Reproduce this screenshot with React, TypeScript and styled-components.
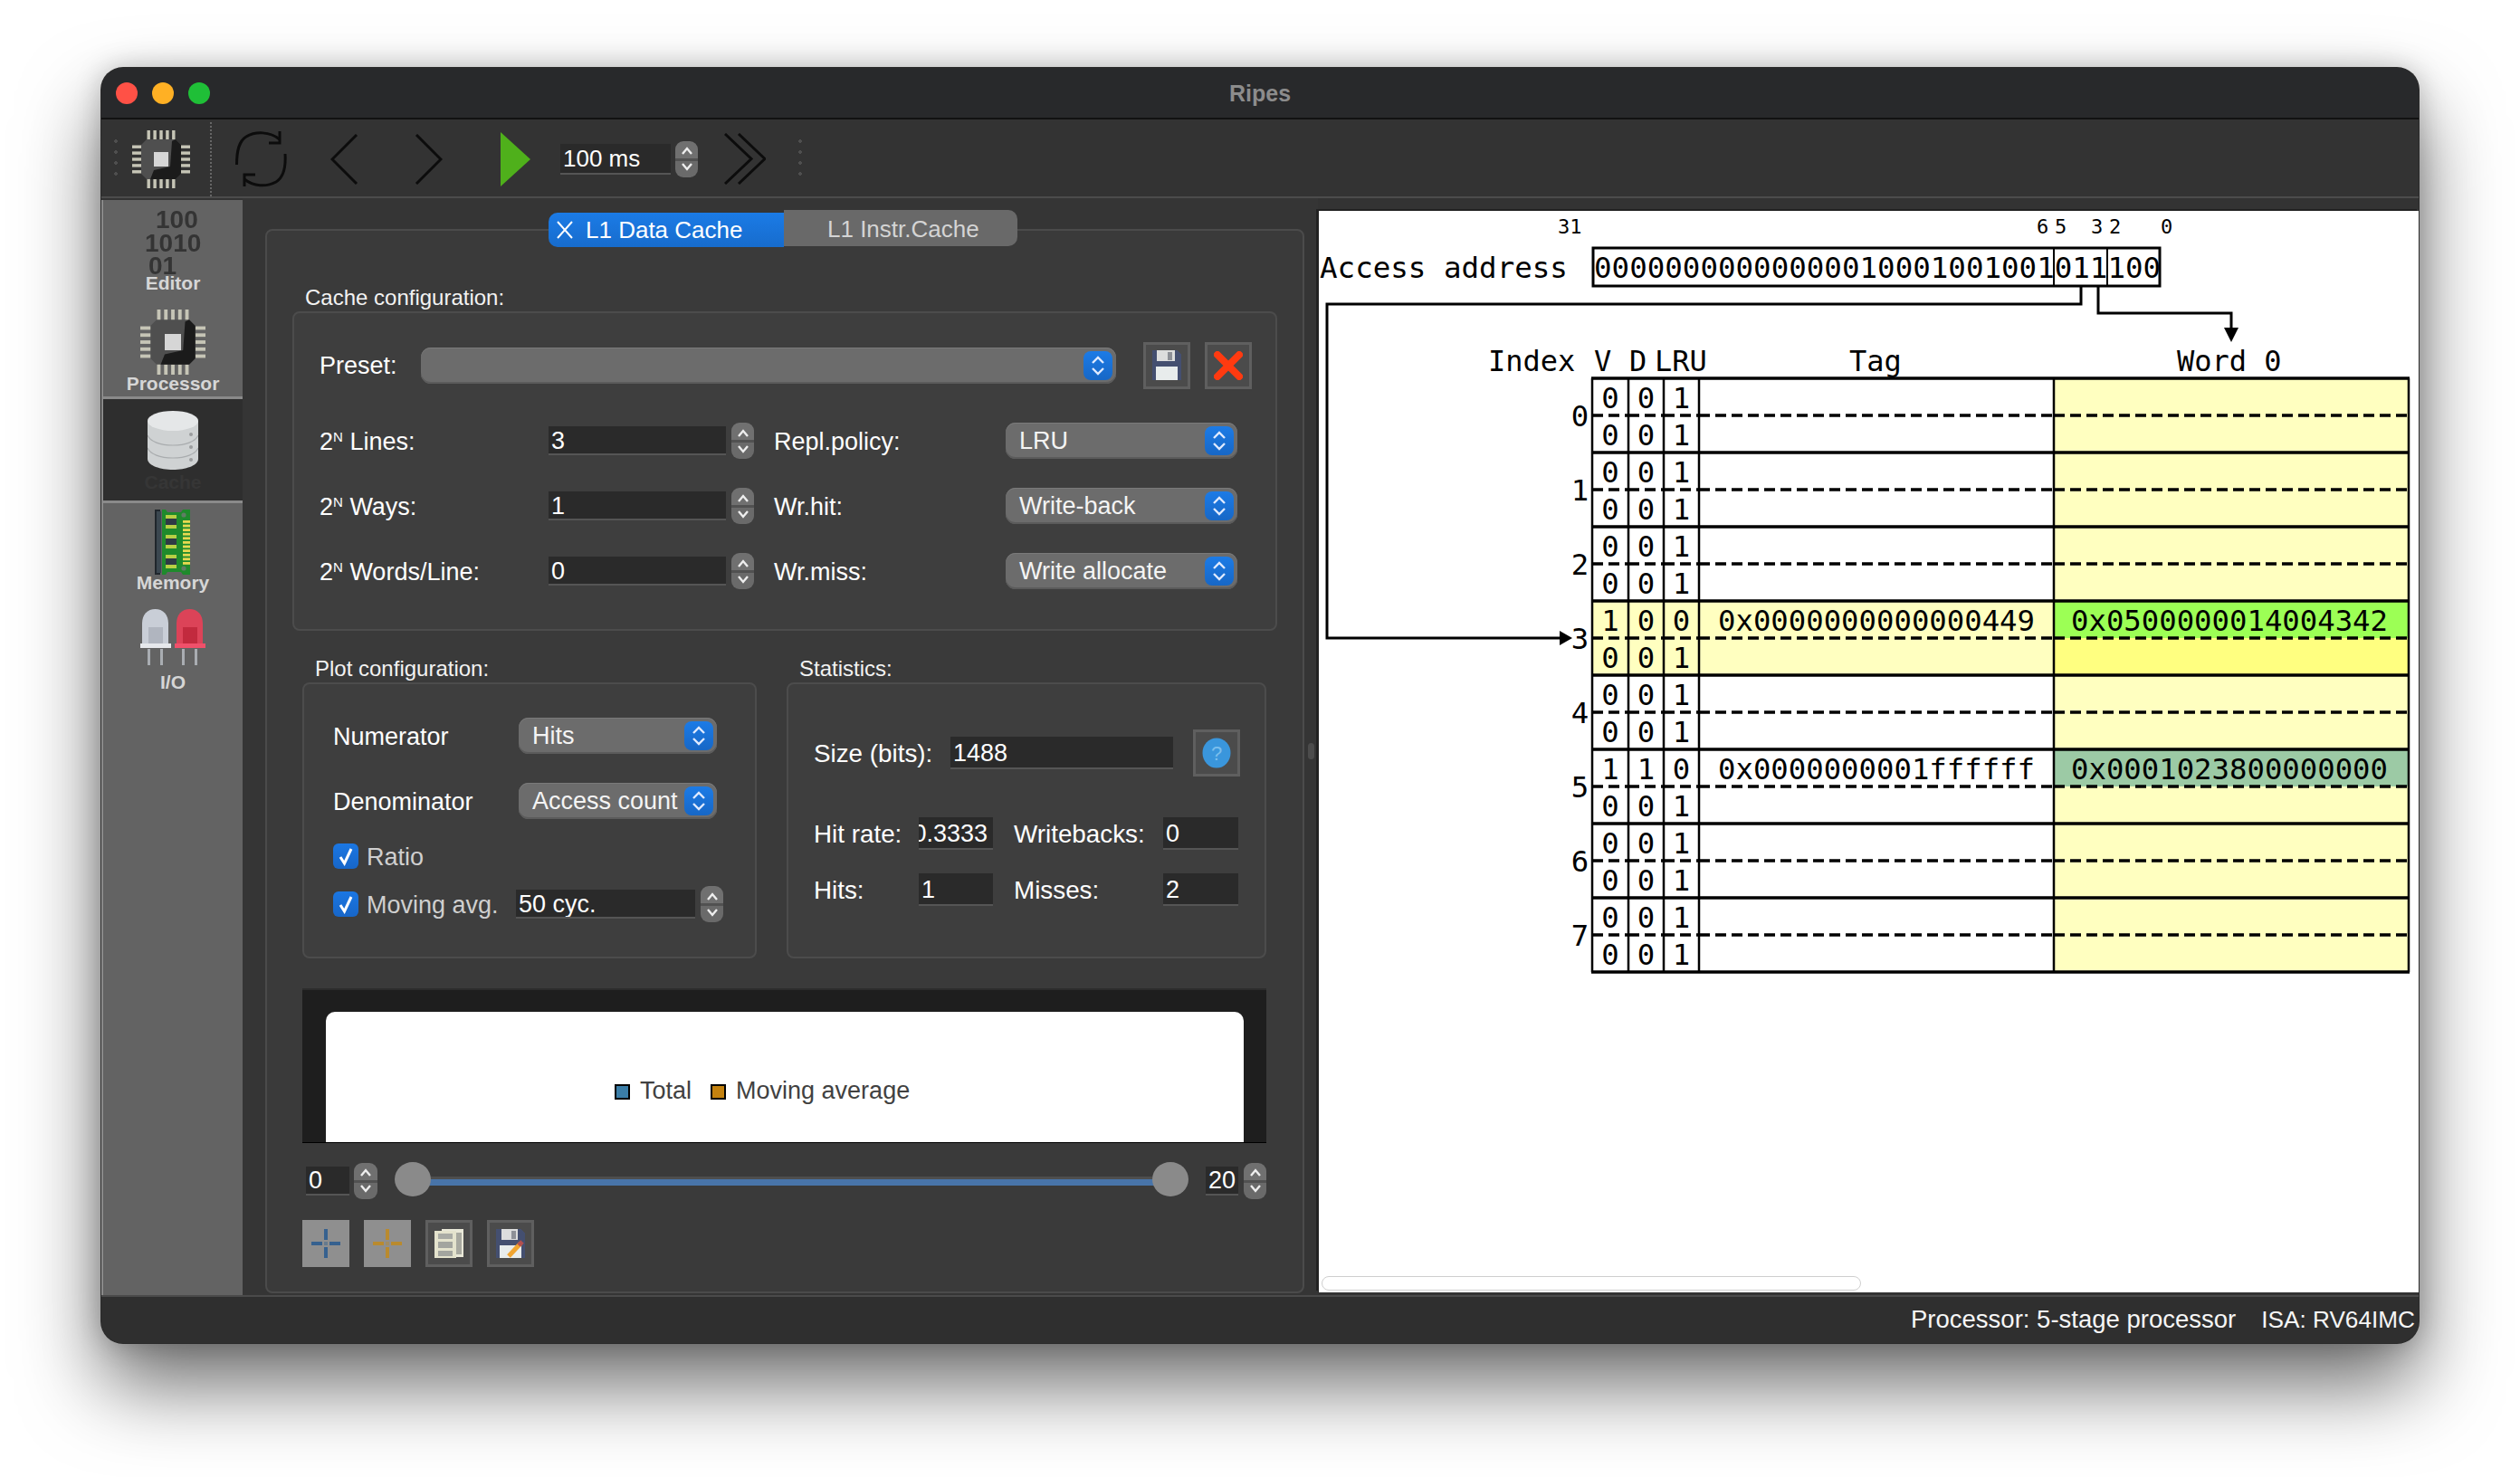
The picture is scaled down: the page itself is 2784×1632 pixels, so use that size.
import React from "react";
import styled, { createGlobalStyle } from "styled-components";

const sans = "'Liberation Sans', Arial, Helvetica, sans-serif";
const mono = "'DejaVu Sans Mono', 'Liberation Mono', monospace";

const Global = createGlobalStyle`
  *, *::before, *::after { box-sizing: border-box; }
  html, body { margin: 0; padding: 0; background: #fff; }
  body { font-family: ${sans}; }
`;

const Page = styled.div`
  width: 2784px;
  height: 1632px;
  padding: 75px 0 0 112px;
  background: #fff;
  overflow: hidden;
`;
const Window = styled.div`
  width: 2560px;
  height: 1409px;
  border-radius: 24px;
  overflow: hidden;
  display: flex;
  flex-direction: column;
  background: #333;
  color: #fff;
  font-size: 27px;
  box-shadow: 0 0 0 1px #2a2a2a, 0 46px 88px rgba(0, 0, 0, 0.58), 0 0 30px rgba(0, 0, 0, 0.22);
`;
const TitleBar = styled.header`
  height: 57px;
  flex: none;
  display: grid;
  grid-template-columns: 1fr auto 1fr;
  align-items: center;
  background: #28292b;
  border-bottom: 2px solid #121212;
  padding: 0 16px;
`;
const Lights = styled.div`
  display: flex;
  gap: 16px;
`;
const Light = styled.span<{ $c: string }>`
  width: 24px;
  height: 24px;
  border-radius: 50%;
  background: ${(p) => p.$c};
`;
const Title = styled.div`
  font-weight: 700;
  font-size: 25px;
  color: #8c8c8c;
  padding-top: 2px;
`;

const Toolbar = styled.div`
  height: 87px;
  flex: none;
  display: flex;
  align-items: center;
  padding-top: 2px;
  background: #333;
  border-bottom: 2px solid #4c4c4c;
`;
const ToolIcon = styled.svg<{ $ml: number }>`
  flex: none;
  display: block;
  margin-left: ${(p) => p.$ml}px;
`;
const Grip = styled.div<{ $ml: number }>`
  margin-left: ${(p) => p.$ml}px;
  width: 4px;
  height: 52px;
  background-image: radial-gradient(circle, #4f4f4f 1.6px, transparent 2px);
  background-size: 4px 12px;
  background-repeat: repeat-y;
`;
const DotSep = styled.div<{ $ml: number }>`
  margin-left: ${(p) => p.$ml}px;
  width: 0;
  height: 82px;
  border-left: 2px dotted #666;
`;

const Body = styled.div`
  flex: none;
  height: 1212px;
  display: flex;
`;
const Sidebar = styled.nav`
  width: 156px;
  flex: none;
  margin-top: 2px;
  background: #636363;
  border-left: 2px solid #8a8a8a;
  display: flex;
  flex-direction: column;
  align-items: stretch;
`;
const SideItem = styled.div<{ $h: number; $pt: number; $selected?: boolean; $rule?: boolean }>`
  height: ${(p) => p.$h}px;
  flex: none;
  padding-top: ${(p) => p.$pt}px;
  display: flex;
  flex-direction: column;
  align-items: center;
  background: ${(p) => (p.$selected ? "#2e2e2e" : "transparent")};
  border-bottom: ${(p) => (p.$rule ? "3px solid #8a8a8a" : "none")};
`;
const SideLabel = styled.div<{ $mt: number; $c?: string }>`
  font-weight: 700;
  font-size: 21px;
  line-height: 22px;
  margin-top: ${(p) => p.$mt}px;
  color: ${(p) => p.$c ?? "#d6d6d6"};
`;
const Binary = styled.div`
  width: 62px;
  font-weight: 700;
  font-size: 28px;
  line-height: 25.5px;
  color: #343434;
  filter: blur(0.5px);
  height: 72px;
`;
const BinaryLine = styled.div<{ $ml: number }>`
  margin-left: ${(p) => p.$ml}px;
`;

const Center = styled.section`
  width: 1188px;
  flex: none;
  position: relative;
  padding: 13px 15px 2px 25px;
  background: #353535;
  display: flex;
  flex-direction: column;
`;
const Splitter = styled.div`
  position: absolute;
  left: 1177px;
  top: 602px;
  width: 7px;
  height: 18px;
  border-radius: 4px;
  background: #4c4c4c;
`;
const TabBar = styled.div`
  height: 41px;
  flex: none;
  display: flex;
  align-items: flex-start;
  margin-left: 313px;
  position: relative;
  z-index: 1;
  font-size: 26px;
`;
const ActiveTab = styled.div`
  width: 260px;
  height: 38px;
  margin-top: 3px;
  padding-left: 9px;
  display: flex;
  align-items: center;
  gap: 14px;
  border-radius: 10px 0 0 10px;
  background: linear-gradient(#1b7be6, #176ccd);
  color: #fff;
`;
const IdleTab = styled.div`
  width: 258px;
  height: 40px;
  padding: 2px 0 0 48px;
  display: flex;
  align-items: center;
  border-radius: 0 10px 10px 0;
  background: #696969;
  color: #d4d4d4;
`;
const TabPane = styled.div`
  flex: 1;
  margin-top: -20px;
  padding: 63px 28px 0 28px;
  background: #3a3a3a;
  border: 2px solid #4b4b4b;
  border-radius: 8px;
  display: flex;
  flex-direction: column;
`;
const SectionLabel = styled.div`
  height: 26px;
  padding-left: 14px;
  font-size: 24px;
  line-height: 22px;
  color: #f2f2f2;
`;
const CacheGroup = styled.div`
  height: 353px;
  padding: 32px 0 0 28px;
  background: #3e3e3e;
  border: 2px solid #4c4c4c;
  border-radius: 8px;
  display: flex;
  flex-direction: column;
`;
const PresetRow = styled.div`
  display: flex;
  align-items: center;
  height: 51px;
  margin-bottom: 38px;
`;
const Label = styled.div<{ $w: number; $dim?: boolean }>`
  width: ${(p) => p.$w}px;
  flex: none;
  padding-top: 2px;
  white-space: nowrap;
  color: ${(p) => (p.$dim ? "#cfcfcf" : "#fff")};
`;
const Sup = styled.sup`
  font-size: 15px;
  line-height: 0;
  vertical-align: 9px;
`;
const ConfigGrid = styled.div`
  display: grid;
  grid-template-columns: 253px 196px 53px 256px 256px;
  grid-auto-rows: 40px;
  row-gap: 32px;
  align-items: center;
`;
const ComboBox = styled.div<{ $w?: number; $ml?: number }>`
  width: ${(p) => (p.$w ? `${p.$w}px` : "auto")};
  margin-left: ${(p) => p.$ml ?? 0}px;
  height: 40px;
  flex: none;
  display: flex;
  align-items: center;
  justify-content: space-between;
  padding: 0 4px 0 15px;
  border-radius: 11px;
  background: #6c6c6c;
  box-shadow: inset 0 -2px 0 #5b5b5b, inset 0 1px 0 #7a7a7a;
  color: #f4f4f4;
  white-space: nowrap;
`;
const ComboArrow = styled.div`
  width: 32px;
  height: 32px;
  flex: none;
  border-radius: 8px;
  background: linear-gradient(#1c7be6, #1767c6);
  display: flex;
  align-items: center;
  justify-content: center;
`;
const Field = styled.div<{ $w?: number; $h?: number; $end?: boolean }>`
  width: ${(p) => (p.$w ? `${p.$w}px` : "auto")};
  height: ${(p) => p.$h ?? 32}px;
  flex: none;
  display: flex;
  align-items: center;
  justify-content: ${(p) => (p.$end ? "flex-end" : "flex-start")};
  padding: ${(p) => (p.$end ? "2px 6px 0 0" : "2px 0 0 3px")};
  background: #2a2a2a;
  border-bottom: 2px solid #555;
  overflow: hidden;
  white-space: nowrap;
  color: #fff;
`;
const ToolField = styled(Field)`
  margin-left: 33px;
  font-size: 26px;
`;
const StepperBody = styled.div<{ $ml?: number; $w?: number }>`
  width: ${(p) => p.$w ?? 25}px;
  height: 40px;
  flex: none;
  margin-left: ${(p) => p.$ml ?? 0}px;
  border-radius: 9px;
  background: linear-gradient(#707070 0 48%, #515151 48% 54%, #6a6a6a 54%);
  display: flex;
  flex-direction: column;
  align-items: center;
  justify-content: space-around;
  padding: 3px 0;
`;
const SquareBtn = styled.div<{ $w?: number; $h?: number; $ml?: number; $flat?: boolean }>`
  width: ${(p) => p.$w ?? 52}px;
  height: ${(p) => p.$h ?? 52}px;
  flex: none;
  margin-left: ${(p) => p.$ml ?? 0}px;
  display: flex;
  align-items: center;
  justify-content: center;
  background: ${(p) => (p.$flat ? "#8f8f8f" : "#4b4b4b")};
  border: ${(p) => (p.$flat ? "none" : "3px solid #5f5f5f")};
`;
const LowerRow = styled.div`
  display: flex;
  gap: 33px;
  margin: 31px 0 0 11px;
`;
const LowerCol = styled.div<{ $w: number }>`
  width: ${(p) => p.$w}px;
  flex: none;
`;
const PlotGroup = styled.div`
  height: 305px;
  padding: 37px 0 0 32px;
  background: #3e3e3e;
  border: 2px solid #4c4c4c;
  border-radius: 8px;
`;
const StatsGroup = styled(PlotGroup)`
  padding: 50px 0 0 28px;
`;
const StatsLabel = styled(Label)`
  font-size: 27.8px;
`;
const FormRow = styled.div<{ $mb?: number; $h?: number }>`
  display: flex;
  align-items: center;
  height: ${(p) => p.$h ?? 40}px;
  margin-bottom: ${(p) => p.$mb ?? 0}px;
`;
const CheckBox = styled.div`
  width: 28px;
  height: 28px;
  flex: none;
  margin-right: 9px;
  border-radius: 6px;
  background: linear-gradient(#1b77e3, #1766c8);
  display: flex;
  align-items: center;
  justify-content: center;
`;
const StatsGrid = styled.div`
  display: grid;
  grid-template-columns: 116px 82px 23px 165px 83px;
  grid-auto-rows: 36px;
  row-gap: 26px;
  align-items: center;
  margin-top: 45px;
`;
const Gap = styled.span``;
const ChartFrame = styled.div`
  margin: 33px 0 0 11px;
  width: 1065px;
  height: 171px;
  flex: none;
  padding: 24px 25px 0 26px;
  background: #1e1e1e;
  border-top: 2px solid #2c2c2c;
  border-bottom: 1px solid #000;
`;
const ChartPaper = styled.div`
  height: 144px;
  padding: 74px 0 0 319px;
  background: #fff;
  border-radius: 10px 10px 0 0;
`;
const Legend = styled.div`
  display: flex;
  align-items: center;
  height: 26px;
  color: #414141;
  font-size: 27px;
`;
const Swatch = styled.span<{ $c: string; $ml?: number }>`
  width: 17px;
  height: 17px;
  margin: 2px 11px 0 ${(p) => p.$ml ?? 0}px;
  background: ${(p) => p.$c};
  border: 2px solid #000;
`;
const SliderRow = styled.div`
  display: flex;
  align-items: center;
  height: 41px;
  width: 1065px;
  margin: 21px 0 0 11px;
  padding-left: 4px;
`;
const SliderTrack = styled.div`
  position: relative;
  width: 877px;
  height: 38px;
  margin: 0 19px;
  flex: none;
  display: flex;
  flex-direction: column;
  justify-content: center;
`;
const TrackLine = styled.div`
  height: 10px;
  margin: 1px 20px 0;
  background: #4874a9;
  border-top: 3px solid #4e4e4e;
`;
const Handle = styled.div<{ $right?: boolean }>`
  position: absolute;
  top: -2px;
  ${(p) => (p.$right ? "right: 0;" : "left: 0;")}
  width: 40px;
  height: 38px;
  border-radius: 50%;
  background: #8a8a8a;
`;
const ButtonRow = styled.div`
  display: flex;
  gap: 16px;
  margin: 23px 0 0 11px;
`;

const RightPane = styled.section`
  width: 1216px;
  height: 1195px;
  flex: none;
  margin-top: 14px;
  position: relative;
  background: #fff;
  box-shadow: -2px -2px 0 #222, inset 1px 0 0 #222;
`;
const DiagramSvg = styled.svg`
  display: block;
  width: 1216px;
  height: 1195px;
  font-family: ${mono};
  fill: #000;
`;
const FauxScroll = styled.div`
  position: absolute;
  left: 4px;
  bottom: 2px;
  width: 596px;
  height: 16px;
  border: 1.5px solid #cfcfcf;
  border-radius: 8px;
`;
const StatusBar = styled.footer`
  flex: none;
  height: 53px;
  display: flex;
  align-items: center;
  justify-content: flex-end;
  gap: 28px;
  padding: 0 4px 1px 0;
  background: #2f2f2f;
  border-top: 2px solid #4a4a4a;
  color: #f6f6f6;
  font-size: 27.5px;
`;
const StatusIsa = styled.span`
  font-size: 26.2px;
`;

const Updown = ({ size = 11 }: { size?: number }) => (
  <svg width={size + 5} height={24} viewBox="0 0 16 24" fill="none" stroke="#dfeaff" strokeWidth={2.4}>
    <path d="M2 9 L8 3 L14 9" />
    <path d="M2 15 L8 21 L14 15" />
  </svg>
);
const Stepper = ({ ml, w }: { ml?: number; w?: number }) => (
  <StepperBody $ml={ml} $w={w}>
    <svg width="14" height="10" viewBox="0 0 14 10" fill="none" stroke="#eee" strokeWidth={2.4}>
      <path d="M2 8 L7 2 L12 8" />
    </svg>
    <svg width="14" height="10" viewBox="0 0 14 10" fill="none" stroke="#eee" strokeWidth={2.4}>
      <path d="M2 2 L7 8 L12 2" />
    </svg>
  </StepperBody>
);
const Combo = ({ text, w, ml }: { text?: string; w?: number; ml?: number }) => (
  <ComboBox $w={w} $ml={ml}>
    <span>{text}</span>
    <ComboArrow>
      <Updown />
    </ComboArrow>
  </ComboBox>
);
const Check = () => (
  <CheckBox>
    <svg width="18" height="22" viewBox="0 0 18 22" fill="none" stroke="#fff" strokeWidth={3}>
      <path d="M3 12 L7.5 19 L15 3" />
    </svg>
  </CheckBox>
);
const Two = () => (
  <>
    2<Sup>N</Sup>
  </>
);

const ChipGlyph = ({ ml, size, pins = "#c6c5b6" }: { ml?: number; size: number; pins?: string }) => (
  <ToolIcon $ml={ml ?? 0} width={size} height={size} viewBox="0 0 64 64">
    {[0, 1, 2, 3, 4].map((i) => (
      <g key={i} fill={pins}>
        <rect x={16.5 + i * 6.9} y={0} width={3.4} height={14} />
        <rect x={16.5 + i * 6.9} y={50} width={3.4} height={14} />
        <rect x={0} y={16.5 + i * 6.9} width={14} height={3.4} />
        <rect x={50} y={16.5 + i * 6.9} width={14} height={3.4} />
      </g>
    ))}
    <path d="M16 10 H48 L54 16 V48 L48 54 H16 L10 48 V16 Z" fill="#4f4f4f" />
    <path d="M44 12 L48 10 L54 16 V48 L48 54 H20 L24 44 L42 40 Z" fill="#1b1b1b" />
    <rect x="24" y="24" width="16" height="16" fill="#d6d6d6" />
  </ToolIcon>
);

const Database = () => (
  <svg width="56" height="66" viewBox="0 0 56 66">
    <path d="M0 11 V53 C0 60 13 65 28 65 C43 65 56 60 56 53 V11 Z" fill="#cfd2d3" />
    <ellipse cx="28" cy="11" rx="28" ry="11" fill="#e5e7e8" />
    <path d="M0 27 C3 34 14 38 28 38 C42 38 53 34 56 27" fill="none" stroke="#a9acae" strokeWidth="1.2" />
    <path d="M0 41 C3 48 14 52 28 52 C42 52 53 48 56 41" fill="none" stroke="#a9acae" strokeWidth="1.2" />
    <circle cx="48" cy="26" r="2" fill="#9a9c9e" />
    <circle cx="48" cy="40" r="2" fill="#9a9c9e" />
    <circle cx="48" cy="54" r="2" fill="#9a9c9e" />
  </svg>
);

const MemoryStick = () => (
  <svg width="40" height="72" viewBox="0 0 40 72">
    <path d="M0 0 H6 V3 H4 V69 H6 V72 H0 Z" fill="#20262c" />
    <rect x="2" y="2" width="5" height="68" fill="#3b4750" />
    <path d="M8 0 H12 L14 3 H29 L31 0 H39 V72 H31 L29 69 H14 L12 72 H8 Z" fill="#1f8a2c" />
    {[6, 28, 50].map((y) => (
      <g key={y}>
        <rect x="12" y={y} width="12" height="4" fill="#b6cf44" />
        <rect x="12" y={y + 4} width="12" height="7" fill="#2e3a45" />
        <rect x="12" y={y + 11} width="12" height="4" fill="#b6cf44" />
      </g>
    ))}
    <circle cx="32" cy="6" r="2.6" fill="#5f7d64" />
    <circle cx="32" cy="65" r="2.6" fill="#5f7d64" />
    {Array.from({ length: 11 }).map((_, i) => (
      <rect key={i} x="31" y={12 + i * 4.6} width="8" height="2.8" fill="#e7d950" />
    ))}
  </svg>
);

const Led = ({ a, b, c }: { a: string; b: string; c: string }) => (
  <g>
    <rect x="8" y="44" width="3" height="18" fill="#a9adb2" />
    <rect x="22" y="44" width="3" height="18" fill="#a9adb2" />
    <path d="M2 40 V16 C2 6 8 0 16.5 0 C25 0 31 6 31 16 V40 Z" fill={a} />
    <rect x="9" y="20" width="16" height="20" fill={c} />
    <rect x="0" y="38" width="34" height="5" fill={b} />
  </g>
);
const Leds = () => (
  <svg width="72" height="62" viewBox="0 0 72 62">
    <Led a="#c9ced7" b="#e6e8ec" c="#b0b5bf" />
    <g transform="translate(38 0)">
      <Led a="#dc4358" b="#f0506a" c="#c22a3e" />
    </g>
  </svg>
);

const FloppyIcon = () => (
  <svg width="32" height="33" viewBox="0 0 32 33" shapeRendering="crispEdges">
    <path d="M0 0 H27 L32 5 V33 H0 Z" fill="#444f70" />
    <rect x="5" y="0" width="20" height="12" fill="#dcdddd" />
    <rect x="17" y="2" width="5" height="9" fill="#8d9097" />
    <rect x="4" y="18" width="24" height="15" fill="#e8ecec" />
  </svg>
);
const RedX = () => (
  <svg width="32" height="32" viewBox="0 0 32 32">
    <path d="M4 4 L28 28 M28 4 L4 28" stroke="#ff3a10" strokeWidth="8" strokeLinecap="round" />
  </svg>
);
const Help = () => (
  <svg width="32" height="34" viewBox="0 0 32 34">
    <ellipse cx="16" cy="17" rx="15.5" ry="16.5" fill="#3a96dc" />
    <text x="16" y="25" textAnchor="middle" fontSize="22" fontFamily={sans} fill="#7cbfec">
      ?
    </text>
  </svg>
);
const PlusMark = ({ c }: { c: string }) => (
  <svg width="32" height="32" viewBox="0 0 32 32" shapeRendering="crispEdges">
    <path d="M0 14 H12 V18 H0 Z M20 14 H32 V18 H20 Z M14 0 H18 V12 H14 Z M14 20 H18 V32 H14 Z" fill={c} />
    <rect x="14" y="14" width="4" height="4" fill={c} opacity="0.45" />
  </svg>
);
const NotesIcon = () => (
  <svg width="32" height="32" viewBox="0 0 32 32" shapeRendering="crispEdges">
    <rect x="8" y="0" width="24" height="31" fill="#e9e8d8" />
    <rect x="24" y="4" width="6" height="24" fill="#a8a9a0" />
    <rect x="0" y="2" width="24" height="30" fill="#e4e3cd" />
    <rect x="4" y="5" width="16" height="6" fill="#a9aba5" />
    <rect x="4" y="14" width="16" height="7" fill="#a3a59f" />
    <rect x="4" y="24" width="16" height="6" fill="#a3a59f" />
  </svg>
);
const PencilFloppy = () => (
  <svg width="32" height="32" viewBox="0 0 32 32">
    <path d="M0 0 H27 L32 5 V32 H0 Z" fill="#444f70" shapeRendering="crispEdges" />
    <rect x="6" y="0" width="18" height="12" fill="#dcdddd" />
    <rect x="17" y="2" width="5" height="9" fill="#8d9097" />
    <rect x="4" y="18" width="24" height="14" fill="#e8ecec" />
    <path d="M14 30 L27 16" stroke="#f0a430" strokeWidth="5" />
    <path d="M25 18 L29 14" stroke="#b2504f" strokeWidth="5" />
  </svg>
);

const cols = [1759, 1799, 1838, 1877, 2269, 2661];
const setTops = [418, 500, 582, 664, 746, 828, 910, 992];
type Way = { v: string; d: string; lru: string; tag?: string; word?: string };
const emptyWay: Way = { v: "0", d: "0", lru: "1" };
const ways = (i: number): [Way, Way] => {
  if (i === 3) return [{ v: "1", d: "0", lru: "0", tag: "0x0000000000000449", word: "0x0500000014004342" }, emptyWay];
  if (i === 5) return [{ v: "1", d: "1", lru: "0", tag: "0x0000000001ffffff", word: "0x0001023800000000" }, emptyWay];
  return [emptyWay, emptyWay];
};

const CacheDiagram = () => (
  <DiagramSvg viewBox="1456 233 1216 1195">
    <g fontSize="22">
      <text x="1721" y="258">31</text>
      <text x="2250" y="258">6</text>
      <text x="2270" y="258">5</text>
      <text x="2310" y="258">3</text>
      <text x="2330" y="258">2</text>
      <text x="2387" y="258">0</text>
    </g>
    <g fontSize="32.5">
      <text x="1458" y="307">Access address</text>
      <text x="1761" y="307">00000000000000010001001001011100</text>
    </g>
    <g fill="none" stroke="#000">
      <rect x="1760" y="274" width="626" height="42" strokeWidth="3" />
      <path d="M2269 274 V316 M2328 274 V316" strokeWidth="2" />
      <path d="M2299 316 V336 H1466 V705 H1724 M2318 316 V346 H2465 V364" strokeWidth="3" />
    </g>
    <path d="M2457 362 H2473 L2465 378 Z M1723 697 V713 L1737 705 Z" />
    <g fontSize="32">
      <text x="1644" y="410">Index</text>
      <text x="1761" y="410">V</text>
      <text x="1800" y="410">D</text>
      <text x="1828" y="410">LRU</text>
      <text x="2043" y="410">Tag</text>
      <text x="2405" y="410">Word 0</text>
    </g>

    <rect x="2269" y="418" width="392" height="656" fill="#ffffc0" />
    <rect x="1759" y="664" width="510" height="82" fill="#ffffc0" />
    <rect x="2269" y="664" width="392" height="41" fill="#9cff55" />
    <rect x="2269" y="705" width="392" height="41" fill="#ffff80" />
    <rect x="2269" y="828" width="392" height="41" fill="#9ccaa5" />

    <g fontSize="32.3">
      {setTops.map((top, i) => (
        <g key={i}>
          <text x="1745.5" y={top + 53} textAnchor="middle">{i}</text>
          {ways(i).map((w, k) => {
            const y = top + k * 41 + 33;
            return (
              <g key={k}>
                <text x="1779" y={y} textAnchor="middle">{w.v}</text>
                <text x="1818.5" y={y} textAnchor="middle">{w.d}</text>
                <text x="1857.5" y={y} textAnchor="middle">{w.lru}</text>
                {w.tag && <text x="1898" y={y}>{w.tag}</text>}
                {w.word && <text x="2288" y={y}>{w.word}</text>}
              </g>
            );
          })}
        </g>
      ))}
    </g>

    <g stroke="#000" fill="none">
      {cols.map((x) => (
        <path key={x} d={`M${x} 418 V1074`} strokeWidth="2.5" />
      ))}
      {[...setTops, 1074].map((y) => (
        <path key={y} d={`M1758 ${y} H2662`} strokeWidth="3.4" />
      ))}
      {setTops.map((top) =>
        cols.slice(0, -1).map((x, c) => (
          <path
            key={`${top}-${x}`}
            d={`M${x} ${top + 41} H${cols[c + 1]}`}
            strokeWidth="3.5"
            strokeDasharray="12 6"
          />
        ))
      )}
    </g>
  </DiagramSvg>
);

export default function App() {
  return (
    <Page>
      <Global />
      <Window>
        <TitleBar>
          <Lights>
            <Light $c="#ff5146" />
            <Light $c="#ffb024" />
            <Light $c="#1fbf37" />
          </Lights>
          <Title>Ripes</Title>
        </TitleBar>

        <Toolbar>
          <Grip $ml={14} />
          <ChipGlyph ml={16} size={64} />
          <DotSep $ml={22} />
          <ToolIcon $ml={26} width="57" height="63" viewBox="0 0 57 63" fill="none" stroke="#0c0c0c" strokeWidth="3">
            <path d="M1.5 38 C1.5 22 4 12 12 7 C22 1 38 1 49 10" />
            <path d="M49 1 V14 H37" />
            <path d="M55 26 C56 42 53 52 45 57 C34 63 20 62 10 54" />
            <path d="M22 49 H10 V62" />
          </ToolIcon>
          <ToolIcon $ml={48} width="31" height="56" viewBox="0 0 31 56" fill="none" stroke="#0c0c0c" strokeWidth="3">
            <path d="M29 1 L2 28 L29 55" />
          </ToolIcon>
          <ToolIcon $ml={62} width="31" height="56" viewBox="0 0 31 56" fill="none" stroke="#0c0c0c" strokeWidth="3">
            <path d="M2 1 L29 28 L2 55" />
          </ToolIcon>
          <ToolIcon $ml={64} width="33" height="60" viewBox="0 0 33 60">
            <path d="M0 0 L33 30 L0 60 Z" fill="#4fb01b" />
          </ToolIcon>
          <ToolField $w={122} $h={34}>100 ms</ToolField>
          <Stepper ml={5} />
          <ToolIcon $ml={29} width="46" height="57" viewBox="0 0 46 57" fill="none" stroke="#0c0c0c" strokeWidth="3">
            <path d="M1 1 L30 28.5 L1 56 M16 1 L45 28.5 L16 56" />
          </ToolIcon>
          <Grip $ml={36} />
        </Toolbar>

        <Body>
          <Sidebar>
            <SideItem $h={110} $pt={9}>
              <Binary>
                <BinaryLine $ml={12}>100</BinaryLine>
                <BinaryLine $ml={0}>1010</BinaryLine>
                <BinaryLine $ml={4}>01</BinaryLine>
              </Binary>
              <SideLabel $mt={0}>Editor</SideLabel>
            </SideItem>
            <SideItem $h={110} $pt={11} $rule>
              <ChipGlyph size={72} />
              <SideLabel $mt={-1}>Processor</SideLabel>
            </SideItem>
            <SideItem $h={115} $pt={13} $selected $rule>
              <Database />
              <SideLabel $mt={2} $c="#363636">Cache</SideLabel>
            </SideItem>
            <SideItem $h={107} $pt={7}>
              <MemoryStick />
              <SideLabel $mt={-2}>Memory</SideLabel>
            </SideItem>
            <SideItem $h={110} $pt={10}>
              <Leds />
              <SideLabel $mt={8}>I/O</SideLabel>
            </SideItem>
          </Sidebar>

          <Center>
            <Splitter />
            <TabBar>
              <ActiveTab>
                <svg width="18" height="20" viewBox="0 0 18 20" stroke="#fff" strokeWidth="2">
                  <path d="M1 1 L17 19 M17 1 L1 19" />
                </svg>
                L1 Data Cache
              </ActiveTab>
              <IdleTab>L1 Instr.Cache</IdleTab>
            </TabBar>
            <TabPane>
              <SectionLabel>Cache configuration:</SectionLabel>
              <CacheGroup>
                <PresetRow>
                  <Label $w={112}>Preset:</Label>
                  <Combo w={768} />
                  <SquareBtn $ml={30}>
                    <FloppyIcon />
                  </SquareBtn>
                  <SquareBtn $ml={16}>
                    <RedX />
                  </SquareBtn>
                </PresetRow>
                <ConfigGrid>
                  <Label $w={253}><Two /> Lines:</Label>
                  <Field $w={196}>3</Field>
                  <Stepper ml={6} />
                  <Label $w={256}>Repl.policy:</Label>
                  <Combo text="LRU" w={256} />

                  <Label $w={253}><Two /> Ways:</Label>
                  <Field $w={196}>1</Field>
                  <Stepper ml={6} />
                  <Label $w={256}>Wr.hit:</Label>
                  <Combo text="Write-back" w={256} />

                  <Label $w={253}><Two /> Words/Line:</Label>
                  <Field $w={196}>0</Field>
                  <Stepper ml={6} />
                  <Label $w={256}>Wr.miss:</Label>
                  <Combo text="Write allocate" w={256} />
                </ConfigGrid>
              </CacheGroup>

              <LowerRow>
                <LowerCol $w={502}>
                  <SectionLabel>Plot configuration:</SectionLabel>
                  <PlotGroup>
                    <FormRow $mb={32}>
                      <Label $w={205}>Numerator</Label>
                      <Combo text="Hits" w={219} />
                    </FormRow>
                    <FormRow $mb={27}>
                      <Label $w={205}>Denominator</Label>
                      <Combo text="Access count" w={219} />
                    </FormRow>
                    <FormRow $h={28} $mb={19}>
                      <Check />
                      <Label $w={100} $dim>Ratio</Label>
                    </FormRow>
                    <FormRow>
                      <Check />
                      <Label $w={165} $dim>Moving avg.</Label>
                      <Field $w={198}>50 cyc.</Field>
                      <Stepper ml={6} />
                    </FormRow>
                  </PlotGroup>
                </LowerCol>
                <LowerCol $w={530}>
                  <SectionLabel>Statistics:</SectionLabel>
                  <StatsGroup>
                    <FormRow $h={52}>
                      <StatsLabel $w={151}>Size (bits):</StatsLabel>
                      <Field $w={246} $h={36}>1488</Field>
                      <SquareBtn $ml={22}>
                        <Help />
                      </SquareBtn>
                    </FormRow>
                    <StatsGrid>
                      <StatsLabel $w={116}>Hit rate:</StatsLabel>
                      <Field $w={82} $h={36} $end>0.3333</Field>
                      <Gap />
                      <StatsLabel $w={165}>Writebacks:</StatsLabel>
                      <Field $w={83} $h={36}>0</Field>

                      <StatsLabel $w={116}>Hits:</StatsLabel>
                      <Field $w={82} $h={36}>1</Field>
                      <Gap />
                      <StatsLabel $w={165}>Misses:</StatsLabel>
                      <Field $w={83} $h={36}>2</Field>
                    </StatsGrid>
                  </StatsGroup>
                </LowerCol>
              </LowerRow>

              <ChartFrame>
                <ChartPaper>
                  <Legend>
                    <Swatch $c="#3b7ea8" />
                    Total
                    <Swatch $c="#c4820f" $ml={21} />
                    Moving average
                  </Legend>
                </ChartPaper>
              </ChartFrame>

              <SliderRow>
                <Field $w={48}>0</Field>
                <Stepper ml={5} w={26} />
                <SliderTrack>
                  <TrackLine />
                  <Handle />
                  <Handle $right />
                </SliderTrack>
                <Field $w={36}>20</Field>
                <Stepper ml={6} />
              </SliderRow>

              <ButtonRow>
                <SquareBtn $flat>
                  <PlusMark c="#36618f" />
                </SquareBtn>
                <SquareBtn $flat>
                  <PlusMark c="#b98a2e" />
                </SquareBtn>
                <SquareBtn>
                  <NotesIcon />
                </SquareBtn>
                <SquareBtn>
                  <PencilFloppy />
                </SquareBtn>
              </ButtonRow>
            </TabPane>
          </Center>

          <RightPane>
            <CacheDiagram />
            <FauxScroll />
          </RightPane>
        </Body>

        <StatusBar>
          <span>Processor: 5-stage processor</span>
          <StatusIsa>ISA: RV64IMC</StatusIsa>
        </StatusBar>
      </Window>
    </Page>
  );
}
